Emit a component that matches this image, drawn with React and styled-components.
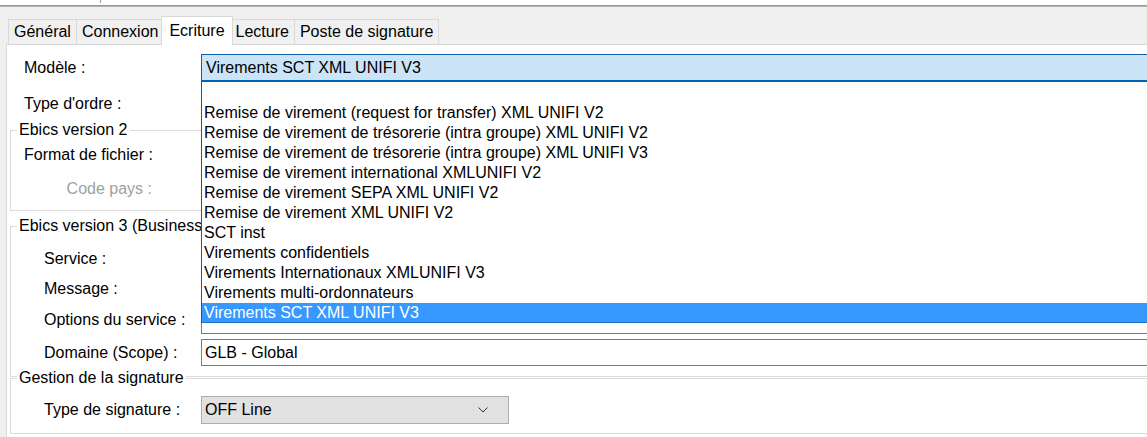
import React from "react";
import styled, { createGlobalStyle } from "styled-components";

const Global = createGlobalStyle`
  html, body { margin: 0; padding: 0; overflow: hidden; background: #fff; }
  body { font-family: "Liberation Sans", Arial, sans-serif; font-size: 16px; color: #000; }
  * { box-sizing: border-box; }
`;

const TopStrip = styled.div`
  height: 5px;
  background: #fff;
`;
const Tick = styled.div`
  margin-left: 100px;
  width: 1px;
  height: 3px;
  background: #a0a0a0;
`;
const Rule = styled.div`
  height: 2px;
  border-top: 1px solid #979797;
  border-bottom: 1px solid #b4b4b4;
`;
const Window = styled.div`
  background: #f0f0f0;
  padding: 9px 0 0 6px;
  width: 1240px;
`;
const TabStrip = styled.div`
  display: flex;
  align-items: flex-end;
  height: 28px;
  padding-left: 2px;
  position: relative;
  z-index: 2;
`;
const Tab = styled.div`
  height: ${(p) => (p.$active ? 29 : 25)}px;
  padding: 0 ${(p) => (p.$active ? 7 : 5)}px;
  margin: 0 ${(p) => (p.$active ? -2 : 0)}px ${(p) => (p.$active ? -1 : 0)}px;
  margin-left: ${(p) => (p.$active ? -3 : -1)}px;
  background: ${(p) => (p.$active ? "#fff" : "#f0f0f0")};
  border: 1px solid #d9d9d9;
  border-bottom: none;
  display: flex;
  align-items: center;
  white-space: nowrap;
  position: relative;
  z-index: ${(p) => (p.$active ? 2 : 1)};
  &:first-child { margin-left: 0; }
`;
const Panel = styled.div`
  background: #fff;
  border: 1px solid #d9d9d9;
  height: 400px;
  position: relative;
`;
const Form = styled.div`
  padding: 9px 0 0 3px;
  display: flex;
  flex-direction: column;
`;
const Row = styled.div`
  display: flex;
  align-items: center;
  height: ${(p) => p.$h || 22}px;
  margin-top: ${(p) => p.$mt || 0}px;
  padding-left: ${(p) => p.$indent}px;
`;
const Label = styled.div`
  flex: none;
  width: ${(p) => p.$w}px;
  padding-right: ${(p) => p.$pr || 0}px;
  text-align: ${(p) => (p.$right ? "right" : "left")};
  color: ${(p) => (p.$muted ? "#a0a0a0" : "#000")};
  white-space: nowrap;
`;
const Group = styled.fieldset`
  margin: ${(p) => p.$mt || 0}px 0 0 0;
  padding: ${(p) => p.$pt}px 0 ${(p) => p.$pb}px 0;
  border: 1px solid #dcdcdc;
  min-width: 0;
  display: flex;
  flex-direction: column;
`;
const Legend = styled.legend`
  margin-left: 6px;
  padding: 0 2px;
  line-height: 18px;
  background: #fff;
  white-space: nowrap;
  max-width: 184px;
  overflow: hidden;
`;
const ComboWrap = styled.div`
  position: relative;
  flex: 1;
  height: 100%;
`;
const ActiveCombo = styled.div`
  height: 100%;
  background: #cce4f7;
  border-top: 1px solid #0f5fa8;
  border-left: 1px solid #0f5fa8;
  border-bottom: 2px solid #0063b8;
  padding-left: 4px;
  display: flex;
  align-items: center;
`;
const Field = styled.div`
  flex: ${(p) => (p.$width ? "none" : 1)};
  width: ${(p) => (p.$width ? `${p.$width}px` : "auto")};
  height: 100%;
  background: ${(p) => (p.$disabled ? "#e1e1e1" : "#fff")};
  border: 1px solid ${(p) => (p.$disabled ? "#adadad" : "#7a7a7a")};
  padding: 0 20px 0 3px;
  display: flex;
  align-items: center;
  justify-content: space-between;
`;
const DropList = styled.div`
  position: absolute;
  top: 100%;
  left: 0;
  right: 0;
  z-index: 10;
  background: #fff;
  border-left: 1px solid #0f5fa8;
  padding-top: 21px;
`;
const Item = styled.div`
  height: 20px;
  padding-left: 2px;
  white-space: nowrap;
  background: ${(p) => (p.$selected ? "#3799ff" : "transparent")};
  color: ${(p) => (p.$selected ? "#fff" : "#000")};
  border-bottom: 1px solid ${(p) => (p.$selected ? "#1c6fc7" : "transparent")};
  line-height: 20px;
`;

const Chevron = () => (
  <svg width="10" height="6" viewBox="0 0 10 6">
    <polyline points="0.5,0.5 5,5 9.5,0.5" fill="none" stroke="#333" strokeWidth="1" />
  </svg>
);

const items = [
  "Remise de virement (request for transfer) XML UNIFI V2",
  "Remise de virement de trésorerie (intra groupe) XML UNIFI V2",
  "Remise de virement de trésorerie (intra groupe) XML UNIFI V3",
  "Remise de virement international XMLUNIFI V2",
  "Remise de virement SEPA XML UNIFI V2",
  "Remise de virement XML UNIFI V2",
  "SCT inst",
  "Virements confidentiels",
  "Virements Internationaux XMLUNIFI V3",
  "Virements multi-ordonnateurs",
  "Virements SCT XML UNIFI V3",
];

const tabs = ["Général", "Connexion", "Ecriture", "Lecture", "Poste de signature"];

export default function App() {
  return (
    <>
      <Global />
      <TopStrip>
        <Tick />
      </TopStrip>
      <Rule />
      <Window>
        <TabStrip>
          {tabs.map((t) => (
            <Tab key={t} $active={t === "Ecriture"}>
              {t}
            </Tab>
          ))}
        </TabStrip>
        <Panel>
          <Form>
            <Row $h={28} $indent={14}>
              <Label $w={177}>Modèle :</Label>
              <ComboWrap>
                <ActiveCombo>Virements SCT XML UNIFI V3</ActiveCombo>
                <DropList>
                  {items.map((it, i) => (
                    <Item key={it} $selected={i === items.length - 1}>
                      {it}
                    </Item>
                  ))}
                </DropList>
              </ComboWrap>
            </Row>
            <Row $h={22} $mt={11} $indent={14}>
              <Label $w={177}>Type d'ordre :</Label>
              <Field />
            </Row>
            <Group $mt={6} $pt={5} $pb={10}>
              <Legend>Ebics version 2</Legend>
              <Row $indent={13}>
                <Label $w={177}>Format de fichier :</Label>
                <Field />
              </Row>
              <Row $mt={12} $indent={13}>
                <Label $w={177} $right $pr={49} $muted>
                  Code pays :
                </Label>
                <Field />
              </Row>
            </Group>
            <Group $mt={6} $pt={13} $pb={10}>
              <Legend>Ebics version 3 (Business</Legend>
              <Row $indent={33}>
                <Label $w={157}>Service :</Label>
                <Field />
              </Row>
              <Row $mt={8} $indent={33}>
                <Label $w={157}>Message :</Label>
                <Field />
              </Row>
              <Row $mt={5} $h={29} $indent={33}>
                <Label $w={157}>Options du service :</Label>
                <Field />
              </Row>
              <Row $mt={5} $h={27} $indent={33}>
                <Label $w={157}>Domaine (Scope) :</Label>
                <Field>GLB - Global</Field>
              </Row>
            </Group>
            <Group $mt={-8} $pt={9} $pb={9}>
              <Legend>Gestion de la signature</Legend>
              <Row $h={28} $indent={33}>
                <Label $w={157}>Type de signature :</Label>
                <Field $width={308} $disabled>
                  <span>OFF Line</span>
                  <Chevron />
                </Field>
              </Row>
            </Group>
          </Form>
        </Panel>
      </Window>
    </>
  );
}
